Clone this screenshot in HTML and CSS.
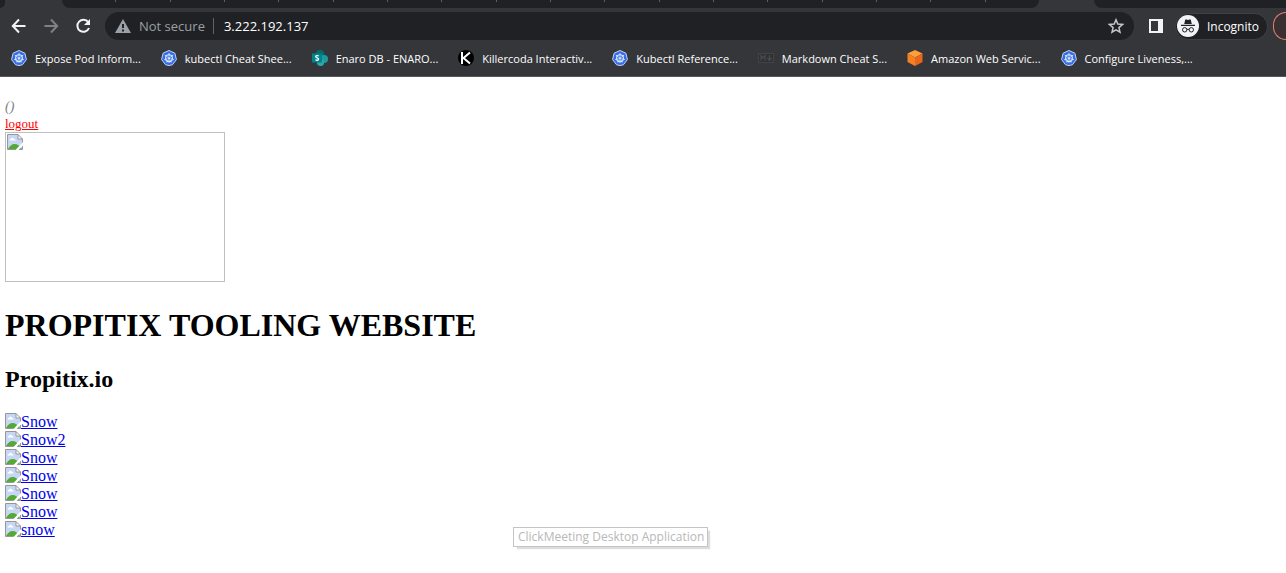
FILE: index.html
```html
<!DOCTYPE html>
<html lang="en">
<head>
<meta charset="utf-8">
<title>Propitix Tooling Website</title>
<link rel="stylesheet" href="styles.css">
</head>
<body>
<svg class="defs" aria-hidden="true">
  <defs>
    <symbol id="kube" viewBox="0 0 16 16">
      <path d="M8 .5 13.9 3.2 15.4 9.6 11.4 14.8 8 15.5 4.6 14.8.6 9.6 2.1 3.2Z" fill="#326de6" stroke="#c3d3f7" stroke-width="1" stroke-linejoin="round"/>
      <circle cx="8" cy="8.2" r="3.4" fill="none" stroke="#dfe8fc" stroke-width="1.1"/>
      <path d="M8 3v3.6M8 9.600v3M3.800 5l3 2.300M12.200 5l-3 2.300M3.200 9.600l3.300-.8M12.800 9.600l-3.300-.8M5.800 12.500l1.400-3M10.200 12.500l-1.400-3" stroke="#dfe8fc" stroke-width=".9"/>
      <circle cx="8" cy="8.200" r="1.100" fill="#dfe8fc"/>
    </symbol>
    <symbol id="broken" viewBox="0 0 16 16">
      <path d="M.5.500H11l4.500 4.500V15.500H.500Z" fill="#c6d7f5"/>
      <path d="M2.500 6.500c0-1.500 1.200-1.500 1.500-1.500.3-1.600 2.700-1.600 3 0 1 0 1.500.5 1.500 1.500Z" fill="#fff"/>
      <path d="M1 15c2-3.500 4-5 6.500-5 3 0 5.500 2 7.500 5Z" fill="#54a935"/>
      <path d="M11 .500V5h4.500Z" fill="#fff"/>
      <path d="M.500.500H11l4.500 4.500V15.500H.500ZM11 .500V5h4.500" fill="none" stroke="#979797"/>
      <path d="M8.500 16 16 8v3.500L11.500 16Z" fill="#fff"/>
    </symbol>
  </defs>
</svg>
<header class="browser">
  <div class="tabstrip">
    <span class="tab-edge"></span>
    <span class="tab-hover"></span>
    <div class="tabs"><i></i><i></i><i></i><i></i><i></i><i></i><i></i><i></i><i></i><i></i><i></i><i></i><i></i><i></i><i></i><i></i><i></i><i></i></div>
    <span class="tab-active"></span>
    <span class="tab-rest"></span>
  </div>
  <div class="toolbar">
    <button class="tool" aria-label="Back"><svg width="16" height="16" viewBox="0 0 16 16"><path d="M14.500 8H2M8 1.500 1.800 8 8 14.500" fill="none" stroke="#f1f3f4" stroke-width="2"/></svg></button>
    <button class="tool" aria-label="Forward" disabled><svg width="16" height="16" viewBox="0 0 16 16"><path d="M1.500 8H14M8 1.500 14.200 8 8 14.500" fill="none" stroke="#808185" stroke-width="2"/></svg></button>
    <button class="tool" aria-label="Reload"><svg width="16" height="16" viewBox="0 0 16 16"><path d="M13.300 4.300A6 6 0 1 0 14 10" fill="none" stroke="#f1f3f4" stroke-width="2"/><path d="M15 1v6H9Z" fill="#f1f3f4"/></svg></button>
    <div class="omnibox">
      <svg width="16" height="14" viewBox="0 0 16 14"><path d="M8 0 16 14H0Z" fill="#9aa0a6"/><path d="M8 5v4M8 10.500v2" stroke="#202124" stroke-width="2"/></svg>
      <span class="insecure">Not secure</span>
      <input class="url" type="text" value="3.222.192.137" aria-label="Address">
      <button class="star" aria-label="Bookmark this page"><svg width="16" height="16" viewBox="0 0 16 16"><path d="m8 1.800 1.800 4.300 4.700.4-3.600 3.100 1.100 4.600L8 11.800l-4 2.400 1.100-4.600-3.600-3.100 4.700-.4Z" fill="none" stroke="#c4c7ca" stroke-width="1.500"/></svg></button>
    </div>
    <button class="panel" aria-label="Side panel"><svg width="14" height="14" viewBox="0 0 14 14"><path d="M0 0h14v14H0ZM2 2v10h7V2Z" fill="#f1f3f4" fill-rule="evenodd"/></svg></button>
    <button class="incognito">
      <svg width="22" height="22" viewBox="0 0 22 22"><circle cx="11" cy="11" r="11" fill="#f1f3f4"/><path d="M7.200 9 8.300 4.500h1.200L11 5l1.500-.5h1.200L14.800 9ZM4 9.800h14v1.200H4Z" fill="#202124"/><g fill="none" stroke="#202124" stroke-width="1"><circle cx="7.700" cy="14.800" r="2.200"/><circle cx="14.300" cy="14.800" r="2.200"/><path d="M9.900 14.500q1.100-.7 2.200 0"/></g></svg>
      <span>Incognito</span>
    </button>
    <button class="update" aria-label="Update"></button>
  </div>
  <nav class="bookmarks">
    <a href="#"><svg width="16" height="16"><use href="#kube"/></svg>Expose Pod Inform...</a>
    <a href="#"><svg width="16" height="16"><use href="#kube"/></svg>kubectl Cheat Shee...</a>
    <a href="#"><svg width="16" height="16" viewBox="0 0 16 16"><circle cx="8" cy="4.500" r="4.500" fill="#036c70"/><circle cx="12" cy="9" r="4" fill="#1a9ba1"/><circle cx="8.500" cy="12.500" r="3.500" fill="#2ba9b0"/><path d="M0 3.500h10v9H0Z" fill="#038387"/><path d="M6.700 6c-1-.7-3-.6-3 .7 0 1.500 2.900.9 2.900 2.400 0 1.400-2.100 1.400-3.100.7" fill="none" stroke="#fff" stroke-width="1.300"/></svg>Enaro DB - ENARO...</a>
    <a href="#"><svg width="16" height="16" viewBox="0 0 16 16"><circle cx="8" cy="8" r="8" fill="#000"/><path d="M4 2v12M12 2.500 5.500 8 12 13.500" fill="none" stroke="#fff" stroke-width="2"/></svg>Killercoda Interactiv...</a>
    <a href="#"><svg width="16" height="16"><use href="#kube"/></svg>Kubectl Reference...</a>
    <a href="#"><svg width="16" height="16" viewBox="0 0 16 16"><rect x=".5" y="3.500" width="15" height="9" fill="#303134" stroke="#424346"/><path d="M3 10.500v-5l2 2.500 2-2.500v5M11.500 5v5M9.500 8l2 2.500 2-2.500" fill="none" stroke="#494a4d" stroke-width="1.300"/></svg>Markdown Cheat S...</a>
    <a href="#"><svg width="16" height="16" viewBox="0 0 16 16"><path d="m8 0 7.500 3.500L8 7.500.500 3.500Z" fill="#fe9f3a"/><path d="M.5 3.500 8 7.500V16L.500 12Z" fill="#f58220"/><path d="M15.500 3.500 8 7.500V16l7.500-4Z" fill="#e9661d"/></svg>Amazon Web Servic...</a>
    <a href="#"><svg width="16" height="16"><use href="#kube"/></svg>Configure Liveness,...</a>
  </nav>
</header>
<main class="page">
  <div class="user">()</div>
  <a class="logout" href="#">logout</a>
  <div class="logo"><svg width="16" height="16"><use href="#broken"/></svg></div>
  <h1>PROPITIX TOOLING WEBSITE</h1>
  <h2>Propitix.io</h2>
  <div class="links">
    <a href="#"><svg width="16" height="16"><use href="#broken"/></svg>Snow</a>
    <a href="#"><svg width="16" height="16"><use href="#broken"/></svg>Snow2</a>
    <a href="#"><svg width="16" height="16"><use href="#broken"/></svg>Snow</a>
    <a href="#"><svg width="16" height="16"><use href="#broken"/></svg>Snow</a>
    <a href="#"><svg width="16" height="16"><use href="#broken"/></svg>Snow</a>
    <a href="#"><svg width="16" height="16"><use href="#broken"/></svg>Snow</a>
    <a href="#"><svg width="16" height="16"><use href="#broken"/></svg>snow</a>
  </div>
</main>
<div class="tooltip" role="tooltip">ClickMeeting Desktop Application</div>
</body>
</html>
```
FILE: styles.css
```css
* { box-sizing: border-box; }
body { margin: 0; background: #fff; color: #000; font-family: "Liberation Serif", serif; font-size: 16px; overflow: hidden; }
.defs { position: absolute; width: 0; height: 0; }
button { border: 0; padding: 0; background: none; font: inherit; color: inherit; }
svg { display: block; flex: none; }

.browser { background: #35363a; border-bottom: 1px solid #57575b; font-family: "Open Sans", sans-serif; font-size: 12px; color: #fff; }
.tabstrip { display: flex; height: 8px; }
.tab-edge { width: 5px; background: #202124; border-bottom-right-radius: 5px; }
.tab-hover { width: 57px; background: #35363a; }
.tabs { flex: 1; display: flex; background: #202124; border-radius: 0 0 8px 8px; }
.tabs i { flex: 1; height: 2px; border-right: 1px solid #5f6064; }
.tabs i:last-child { border: 0; }
.tab-active { width: 55px; }
.tab-rest { width: 192px; background: #202124; border-bottom-left-radius: 8px; }

.toolbar { display: flex; align-items: center; height: 36px; padding-left: 11px; overflow: hidden; }
.tool { width: 16px; height: 16px; margin-right: 16px; }
.omnibox { flex: 1; min-width: 0; display: flex; align-items: center; height: 28px; margin-left: -2px; padding: 0 10px; border-radius: 14px; background: #202124; }
.insecure { margin: 0 8px; color: #9aa0a6; font-size: 13px; white-space: nowrap; }
.url { flex: 1; min-width: 0; height: 16px; padding: 0 0 0 10px; border: 0; border-left: 1px solid #5f6368; background: none; color: #fff; font: 13px/16px "Open Sans", sans-serif; outline: 0; }
.panel { margin: 0 12px 0 15px; }
.incognito { display: flex; align-items: center; gap: 8px; height: 27px; padding: 0 8px 0 1px; border: 1px solid #3f4044; border-radius: 14px; background: #202124; }
.update { width: 13px; height: 28px; margin-left: 5px; border: 1px solid #e57f76; border-right: 0; border-radius: 14px 0 0 14px; background: #3a3032; }

.bookmarks { display: flex; gap: 20px; height: 32px; padding: 0 11px 4px; overflow: hidden; font-size: 11px; }
.bookmarks a { display: flex; align-items: center; gap: 8px; color: #fff; text-decoration: none; white-space: nowrap; }

.page { padding: 21px 5px 0; }
.user { color: #808080; font-size: 14px; font-style: italic; line-height: 18px; }
.logout { display: block; width: max-content; color: #f00; font-size: 13px; line-height: 16px; }
.logo { width: 220px; height: 150px; padding: 1px; border: 1px solid #c0c0c0; }
h1 { margin: 25px 0 22px; font-size: 32px; line-height: 37px; }
h2 { margin: 0 0 20px; font-size: 24px; line-height: 27px; }
.links { display: flex; flex-direction: column; align-items: flex-start; }
.links a { display: flex; height: 18px; color: #00e; line-height: 18px; }

.tooltip { position: absolute; left: 513px; top: 527px; padding: 0 3px 0 4px; border: 1px solid #c4c4c4; background: #fff; box-shadow: 3px 3px 1px -1px #ddd; color: #b8b8b8; font: 12px/18px "Open Sans", sans-serif; white-space: nowrap; }
```
